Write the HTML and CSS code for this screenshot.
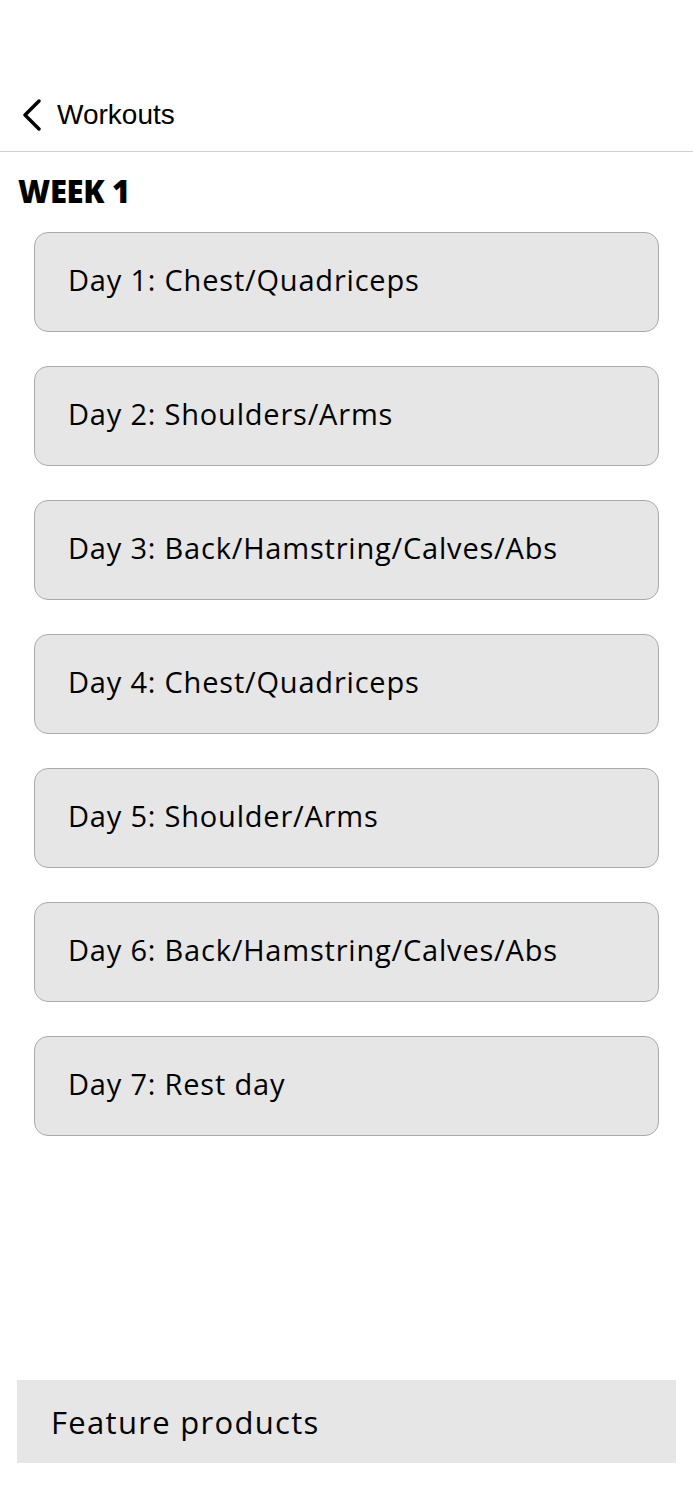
FILE: index.html
```html
<!DOCTYPE html>
<html lang="en">
<head>
<meta charset="utf-8">
<title>Week 1</title>
<link rel="stylesheet" href="styles.css">
</head>
<body>
<div class="page">
  <header class="nav">
    <a class="back" href="#">
      <svg class="chev" width="20" height="32" viewBox="0 0 20 32"><path d="M17 2 L3 16 L17 30" fill="none" stroke="#000" stroke-width="3.4" stroke-linecap="round" stroke-linejoin="round"/></svg>
      <span class="back-label">Workouts</span>
    </a>
  </header>
  <main class="content">
    <h1 class="week">WEEK 1</h1>
    <ul class="days">
      <li class="day">Day 1: Chest/Quadriceps</li>
      <li class="day">Day 2: Shoulders/Arms</li>
      <li class="day">Day 3: Back/Hamstring/Calves/Abs</li>
      <li class="day">Day 4: Chest/Quadriceps</li>
      <li class="day">Day 5: Shoulder/Arms</li>
      <li class="day">Day 6: Back/Hamstring/Calves/Abs</li>
      <li class="day">Day 7: Rest day</li>
    </ul>
  </main>
  <section class="feature">
    <h2 class="feature-title">Feature products</h2>
  </section>
</div>
</body>
</html>
```

FILE: styles.css
```css
html, body {
  margin: 0;
  padding: 0;
  background: #ffffff;
}
.page {
  width: 693px;
  height: 1500px;
  display: flex;
  flex-direction: column;
  font-family: "Open Sans", "Liberation Sans", sans-serif;
  color: #000;
}
.nav {
  height: 152px;
  box-sizing: border-box;
  padding-top: 99px;
  padding-left: 22px;
  border-bottom: 1.5px solid #cfcfcf;
}
.back {
  display: flex;
  align-items: center;
  gap: 15px;
  text-decoration: none;
  color: #000;
}
.chev {
  display: block;
}
.back-label {
  font-family: "Liberation Sans", "Open Sans", sans-serif;
  font-size: 28px;
  line-height: 32px;
}
.content {
  flex: 1;
  padding: 0;
}
.week {
  margin: 21px 0 0 18px;
  font-family: "Open Sans", "Liberation Sans", sans-serif;
  font-weight: 800;
  font-size: 31px;
  line-height: 36px;
  letter-spacing: -0.3px;
}
.days {
  list-style: none;
  margin: 23px 0 0 34px;
  padding: 0;
  width: 625px;
  display: flex;
  flex-direction: column;
  gap: 34px;
}
.day {
  box-sizing: border-box;
  height: 100px;
  display: flex;
  align-items: center;
  padding-left: 33px;
  padding-bottom: 5px;
  background: #e6e6e6;
  border: 1.5px solid #ababab;
  border-radius: 14px;
  font-size: 29px;
  font-weight: 500;
  letter-spacing: 0.8px;
}
.feature {
  margin: 0 17px 37px 17px;
  height: 83px;
  background: #e6e6e6;
  display: flex;
  align-items: center;
  padding-left: 34px;
}
.feature-title {
  margin: 0;
  font-size: 31px;
  font-weight: 500;
  letter-spacing: 1.3px;
}
```
